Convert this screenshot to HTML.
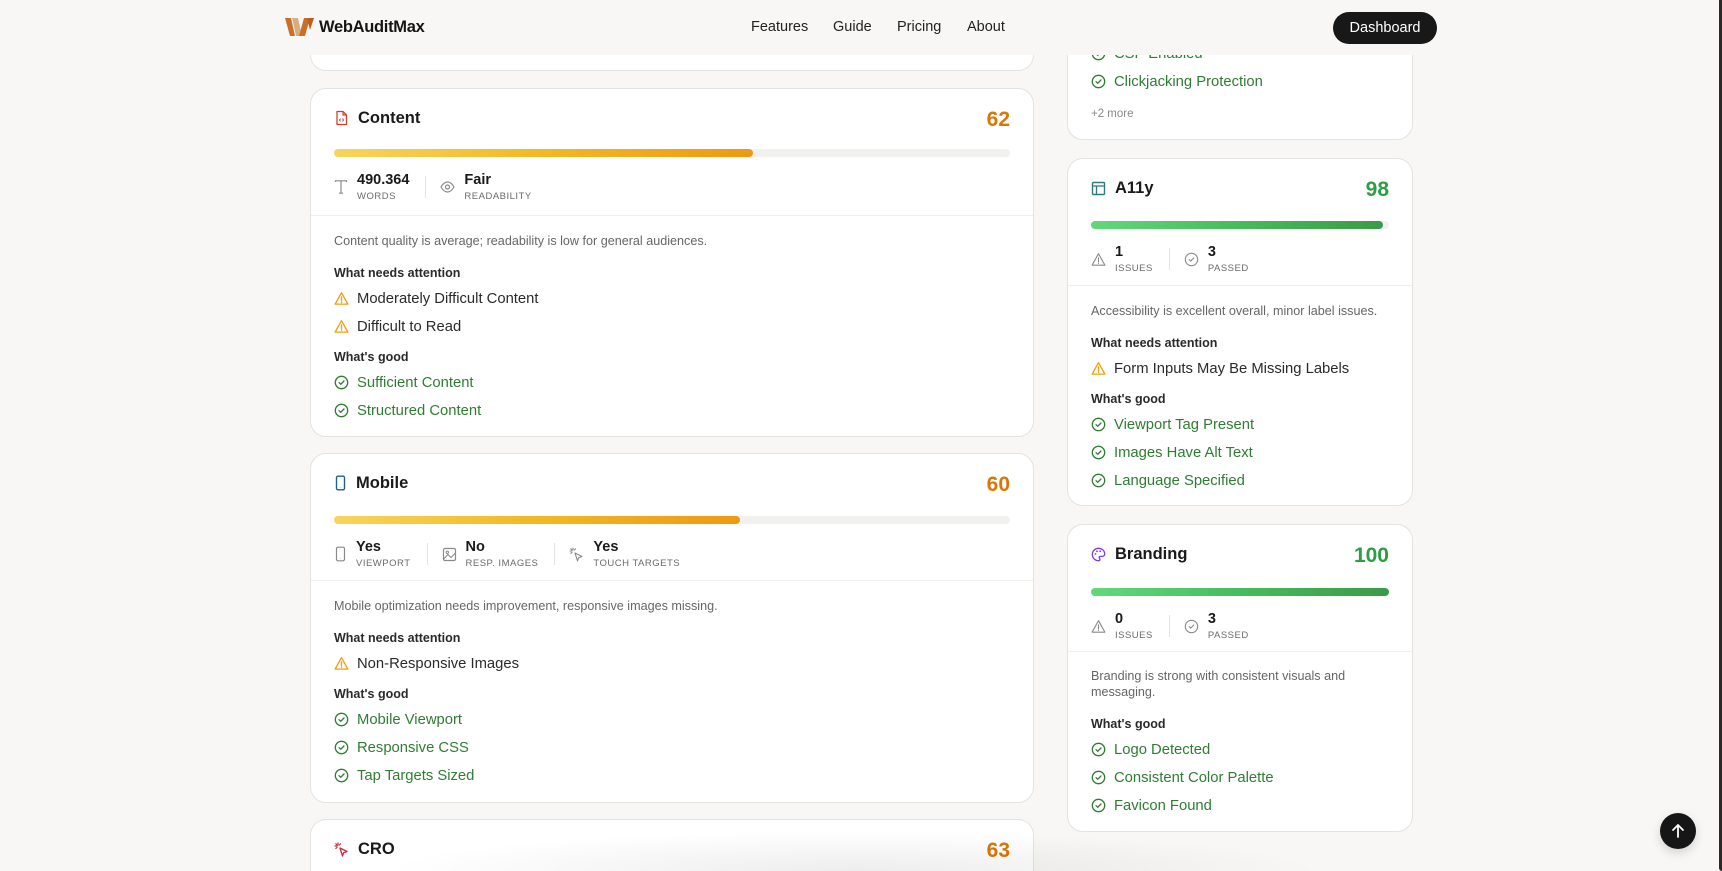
<!DOCTYPE html>
<html><head><meta charset="utf-8"><style>
*{box-sizing:border-box;margin:0;padding:0}
html,body{width:1722px;height:871px;overflow:hidden}
body{background:#f8f7f5;font-family:"Liberation Sans",sans-serif;color:#1a1a1a}
#w{position:relative;width:1722px;height:871px;overflow:hidden}
.nav{position:absolute;left:0;top:0;width:1722px;height:55px;background:#f8f7f5;z-index:5}
.logo{position:absolute;left:285px;top:17px;display:flex;align-items:center}
.logo span{font-weight:bold;font-size:16.5px;letter-spacing:-0.3px;margin-left:5px;color:#151515}
.links a{position:absolute;top:19px;font-size:14.5px;color:#222;text-decoration:none}
.dash{position:absolute;left:1333px;top:12px;width:104px;height:32px;border-radius:16px;background:#181818;color:#fff;font-size:14.5px;text-align:center;line-height:32px}
.card{position:absolute;background:#fff;border:1px solid #e4e3e1;border-radius:16px;overflow:hidden}
.in{padding:0 23px}
.hd{height:58px;padding-top:18px;display:flex;justify-content:space-between;align-items:flex-start;line-height:22px}
.ttl{display:flex;align-items:center;height:22px;font-size:16.5px;font-weight:bold;color:#1a1a1a}
.ttl svg{margin-right:9px}
.sc{font-size:21px;font-weight:bold;margin-top:2px}
.or{color:#d97706}.gr{color:#2e9e44}
.bar{height:8px;border-radius:4px;background:#f1f1f0;margin-top:2px;position:relative}
.bar i{position:absolute;left:0;top:0;bottom:0;border-radius:4px}
.ob{background:linear-gradient(90deg,#f8d45c,#f2b824 50%,#ee9912)}
.gb{background:linear-gradient(90deg,#62d87c,#48bb5c 50%,#3a9b49)}
.stats{display:flex;padding-top:10px;height:59px;border-bottom:1px solid #eeeeec;margin:0 -23px;padding-left:23px}
.st{display:flex;align-items:center;height:40px;padding-right:16px}
.st+.st{border-left:1px solid #e4e4e2;padding-left:14px;height:22px;margin-top:9px}
.st svg{margin-right:9px;flex:none}
.v{font-size:14.5px;font-weight:bold;line-height:20px}
.l{font-size:9.5px;color:#6b6b6b;letter-spacing:.5px;line-height:14px}
.desc{font-size:12.6px;color:#666;line-height:18px;margin-top:16px}
.h{font-size:12.5px;font-weight:bold;color:#2a2a2a;line-height:18px;margin-top:14px}
.h.g2{margin-top:7px}
.it{display:flex;align-items:center;height:28px;font-size:14.8px}
.h+.it{margin-top:3px}
.it svg{margin-right:8px;flex:none;position:relative;top:-1px}
.it.w{color:#2a2a2a}.it.ok{color:#2f7d32}
.up{position:absolute;left:1660px;top:813px;width:36px;height:36px;border-radius:50%;background:#161616;box-shadow:0 4px 10px rgba(0,0,0,.15);z-index:6}
.edge{position:absolute;right:0;top:0;width:3px;height:871px;background:#2a2a2a;border-bottom-left-radius:8px;z-index:7}
.shade{position:absolute;left:380px;top:831px;width:950px;height:40px;background:radial-gradient(ellipse at center bottom,rgba(0,0,0,.07),rgba(0,0,0,0) 70%);z-index:4}
</style></head><body><div id="w">
<svg width="0" height="0" style="position:absolute"><defs>
<symbol id="ck" viewBox="0 0 16 16"><circle cx="8" cy="8" r="6.6" fill="none" stroke="currentColor" stroke-width="1.4"/><path d="M5.4 8.2l1.8 1.7 3.4-3.5" fill="none" stroke="currentColor" stroke-width="1.4" stroke-linecap="round" stroke-linejoin="round"/></symbol>
<symbol id="wn" viewBox="0 0 16 16"><path d="M8 1.8L14.8 14H1.2Z" fill="none" stroke="#f59e0b" stroke-width="1.4" stroke-linejoin="round"/><path d="M8 6.3v3.9M8 11.8v.4" stroke="#f59e0b" stroke-width="1.4" stroke-linecap="round"/></symbol>
<symbol id="wg" viewBox="0 0 16 16"><path d="M8 1.8L14.8 14H1.2Z" fill="none" stroke="#8a8a8a" stroke-width="1.2" stroke-linejoin="round"/><path d="M8 6.3v3.9M8 11.8v.4" stroke="#8a8a8a" stroke-width="1.2" stroke-linecap="round"/></symbol>
<symbol id="cg" viewBox="0 0 16 16"><circle cx="8" cy="8" r="6.6" fill="none" stroke="#8a8a8a" stroke-width="1.2"/><path d="M5.6 8.2l1.6 1.5 3.2-3.3" fill="none" stroke="#8a8a8a" stroke-width="1.2" stroke-linecap="round"/></symbol>
</defs></svg>

<div class="nav">
 <div class="logo"><svg width="29" height="20" viewBox="0 0 29 20"><path d="M0 1h6l4 18H5Z" fill="#c8702a"/><path d="M7 1h6l3 14-2 4h-3Z" fill="#d9ad7e"/><path d="M14 19l5-18h6l-5 18Z" fill="#c8702a"/><path d="M22 1h7l-4 12Z" fill="#b85f22"/></svg><span>WebAuditMax</span></div>
 <div class="links"><a style="left:751px">Features</a><a style="left:833px">Guide</a><a style="left:897px">Pricing</a><a style="left:967px">About</a></div>
 <div class="dash">Dashboard</div>
</div>

<div class="card" style="left:310px;top:-40px;width:724px;height:111px"></div>

<div class="card" style="left:1067px;top:-60px;width:346px;height:200px">
 <div class="in" style="padding-top:99px">
  <div class="it ok"><svg width="15" height="15" style="color:#2f7d32"><use href="#ck"/></svg>CSP Enabled</div>
  <div class="it ok"><svg width="15" height="15" style="color:#2f7d32"><use href="#ck"/></svg>Clickjacking Protection</div>
  <div style="font-size:11.5px;color:#8a8a8a;margin-top:12px">+2 more</div>
 </div>
</div>

<div class="card" style="left:310px;top:88px;width:724px;height:349px"><div class="in">
 <div class="hd"><div class="ttl"><svg width="15" height="16" viewBox="0 0 15 16"><path d="M3 1.5h6l3.5 3.5v9.5H3Z" fill="none" stroke="#d2402b" stroke-width="1.3" stroke-linejoin="round"/><path d="M9 1.5v3.5h3.5" fill="none" stroke="#d2402b" stroke-width="1.2"/><path d="M6.5 8.5l-1 1.5 1 1.5M8.5 8.5l1 1.5-1 1.5" fill="none" stroke="#d2402b" stroke-width="1"/></svg>Content</div><div class="sc or">62</div></div>
 <div class="bar"><i class="ob" style="width:62%"></i></div>
 <div class="stats">
  <div class="st"><svg width="14" height="16" viewBox="0 0 14 16"><path d="M1.5 3V1.8h11V3M7 1.8v12.4M5 14.2h4" fill="none" stroke="#8a8a8a" stroke-width="1.2"/></svg><div class="box"><div class="v">490.364</div><div class="l">WORDS</div></div></div>
  <div class="st"><svg width="15" height="14" viewBox="0 0 15 14"><path d="M1 7c2-3.5 4-5 6.5-5s4.5 1.5 6.5 5c-2 3.5-4 5-6.5 5S3 10.5 1 7Z" fill="none" stroke="#8a8a8a" stroke-width="1.2"/><circle cx="7.5" cy="7" r="2" fill="none" stroke="#8a8a8a" stroke-width="1.2"/></svg><div class="box"><div class="v">Fair</div><div class="l">READABILITY</div></div></div>
 </div>
 <div class="desc">Content quality is average; readability is low for general audiences.</div>
 <div class="h">What needs attention</div>
 <div class="it w"><svg width="15" height="15"><use href="#wn"/></svg>Moderately Difficult Content</div>
 <div class="it w"><svg width="15" height="15"><use href="#wn"/></svg>Difficult to Read</div>
 <div class="h g2">What's good</div>
 <div class="it ok"><svg width="15" height="15" style="color:#2f7d32"><use href="#ck"/></svg>Sufficient Content</div>
 <div class="it ok"><svg width="15" height="15" style="color:#2f7d32"><use href="#ck"/></svg>Structured Content</div>
</div></div>

<div class="card" style="left:310px;top:453px;width:724px;height:350px"><div class="in">
 <div class="hd"><div class="ttl"><svg width="13" height="16" viewBox="0 0 13 16"><rect x="2.5" y="1.2" width="8" height="13.6" rx="1.5" fill="none" stroke="#1d5f8f" stroke-width="1.4"/><path d="M6.5 12.2v.3" stroke="#1d5f8f" stroke-width="1.3"/></svg>Mobile</div><div class="sc or">60</div></div>
 <div class="bar" style="margin-top:4px"><i class="ob" style="width:60%"></i></div>
 <div class="stats" style="height:57px">
  <div class="st"><svg width="13" height="16" viewBox="0 0 13 16"><rect x="2.5" y="1.2" width="8" height="13.6" rx="1.5" fill="none" stroke="#8a8a8a" stroke-width="1.2"/><path d="M6.5 12.2v.3" stroke="#8a8a8a" stroke-width="1.2"/></svg><div class="box"><div class="v">Yes</div><div class="l">VIEWPORT</div></div></div>
  <div class="st"><svg width="15" height="15" viewBox="0 0 15 15"><rect x="1.5" y="1.5" width="12" height="12" rx="1.5" fill="none" stroke="#8a8a8a" stroke-width="1.2"/><circle cx="5.3" cy="5.3" r="1.2" fill="none" stroke="#8a8a8a"/><path d="M1.5 12l4.5-4.5 3 3 4.5-4.5" fill="none" stroke="#8a8a8a" stroke-width="1.1"/></svg><div class="box"><div class="v">No</div><div class="l">RESP. IMAGES</div></div></div>
  <div class="st"><svg width="15" height="15" viewBox="0 0 15 15"><path d="M6 6l2.5 8 1.2-3.3 3.3-1.2Z" fill="none" stroke="#8a8a8a" stroke-width="1.1" stroke-linejoin="round"/><path d="M4 1v2M1 4h2M1.8 1.8l1.3 1.3M6.5 1.8L5.3 3M1.8 6.5L3 5.3" stroke="#8a8a8a" stroke-width="1.1" stroke-linecap="round"/></svg><div class="box"><div class="v">Yes</div><div class="l">TOUCH TARGETS</div></div></div>
 </div>
 <div class="desc">Mobile optimization needs improvement, responsive images missing.</div>
 <div class="h">What needs attention</div>
 <div class="it w"><svg width="15" height="15"><use href="#wn"/></svg>Non-Responsive Images</div>
 <div class="h g2">What's good</div>
 <div class="it ok"><svg width="15" height="15" style="color:#2f7d32"><use href="#ck"/></svg>Mobile Viewport</div>
 <div class="it ok"><svg width="15" height="15" style="color:#2f7d32"><use href="#ck"/></svg>Responsive CSS</div>
 <div class="it ok"><svg width="15" height="15" style="color:#2f7d32"><use href="#ck"/></svg>Tap Targets Sized</div>
</div></div>

<div class="card" style="left:310px;top:819px;width:724px;height:52px;border-bottom:none;border-radius:16px 16px 0 0"><div class="in">
 <div class="hd"><div class="ttl"><svg width="15" height="15" viewBox="0 0 15 15"><path d="M6 6l2.5 8 1.2-3.3 3.3-1.2Z" fill="none" stroke="#d0263a" stroke-width="1.3" stroke-linejoin="round"/><path d="M4 1v2M1 4h2M1.8 1.8l1.3 1.3M6.5 1.8L5.3 3M1.8 6.5L3 5.3" stroke="#d0263a" stroke-width="1.2" stroke-linecap="round"/></svg>CRO</div><div class="sc or">63</div></div>
</div></div>

<div class="card" style="left:1067px;top:158px;width:346px;height:348px"><div class="in">
 <div class="hd"><div class="ttl"><svg width="15" height="15" viewBox="0 0 15 15"><rect x="1.5" y="1.5" width="12" height="12" rx="1" fill="none" stroke="#2d7a7a" stroke-width="1.4"/><path d="M1.5 5h12M5.5 5v8.5" stroke="#2d7a7a" stroke-width="1.3"/></svg>A11y</div><div class="sc gr">98</div></div>
 <div class="bar" style="margin-top:4px"><i class="gb" style="width:98%"></i></div>
 <div class="stats" style="height:57px">
  <div class="st"><svg width="15" height="15"><use href="#wg"/></svg><div class="box"><div class="v">1</div><div class="l">ISSUES</div></div></div>
  <div class="st"><svg width="15" height="15"><use href="#cg"/></svg><div class="box"><div class="v">3</div><div class="l">PASSED</div></div></div>
 </div>
 <div class="desc">Accessibility is excellent overall, minor label issues.</div>
 <div class="h">What needs attention</div>
 <div class="it w"><svg width="15" height="15"><use href="#wn"/></svg>Form Inputs May Be Missing Labels</div>
 <div class="h g2">What's good</div>
 <div class="it ok"><svg width="15" height="15" style="color:#2f7d32"><use href="#ck"/></svg>Viewport Tag Present</div>
 <div class="it ok"><svg width="15" height="15" style="color:#2f7d32"><use href="#ck"/></svg>Images Have Alt Text</div>
 <div class="it ok"><svg width="15" height="15" style="color:#2f7d32"><use href="#ck"/></svg>Language Specified</div>
</div></div>

<div class="card" style="left:1067px;top:524px;width:346px;height:308px"><div class="in">
 <div class="hd"><div class="ttl"><svg width="15" height="15" viewBox="0 0 15 15"><path d="M7.5 1.3a6.2 6.2 0 1 0 0 12.4c1 0 1.4-.6 1.4-1.3 0-.9-.7-1-.7-1.8 0-.7.6-1.2 1.3-1.2h1.6c1.8 0 2.6-1.200 2.6-2.6 0-3-2.8-5.5-6.2-5.5Z" fill="none" stroke="#7c3aed" stroke-width="1.3"/><circle cx="4.5" cy="7" r=".9" fill="#7c3aed"/><circle cx="6" cy="4.3" r=".9" fill="#7c3aed"/><circle cx="9.2" cy="4.3" r=".9" fill="#7c3aed"/></svg>Branding</div><div class="sc gr">100</div></div>
 <div class="bar" style="margin-top:5px"><i class="gb" style="width:100%"></i></div>
 <div class="stats" style="height:56px">
  <div class="st"><svg width="15" height="15"><use href="#wg"/></svg><div class="box"><div class="v">0</div><div class="l">ISSUES</div></div></div>
  <div class="st"><svg width="15" height="15"><use href="#cg"/></svg><div class="box"><div class="v">3</div><div class="l">PASSED</div></div></div>
 </div>
 <div class="desc" style="line-height:16px;margin-top:16px;padding-right:20px">Branding is strong with consistent visuals and messaging.</div>
 <div class="h" style="margin-top:15px">What's good</div>
 <div class="it ok"><svg width="15" height="15" style="color:#2f7d32"><use href="#ck"/></svg>Logo Detected</div>
 <div class="it ok"><svg width="15" height="15" style="color:#2f7d32"><use href="#ck"/></svg>Consistent Color Palette</div>
 <div class="it ok"><svg width="15" height="15" style="color:#2f7d32"><use href="#ck"/></svg>Favicon Found</div>
</div></div>

<div class="shade"></div>
<div class="up"><svg width="36" height="36" viewBox="0 0 36 36"><path d="M18 24V12.5M13 17l5-5 5 5" fill="none" stroke="#fff" stroke-width="1.8" stroke-linecap="round" stroke-linejoin="round"/></svg></div>
<div class="edge"></div>
</div></body></html>
